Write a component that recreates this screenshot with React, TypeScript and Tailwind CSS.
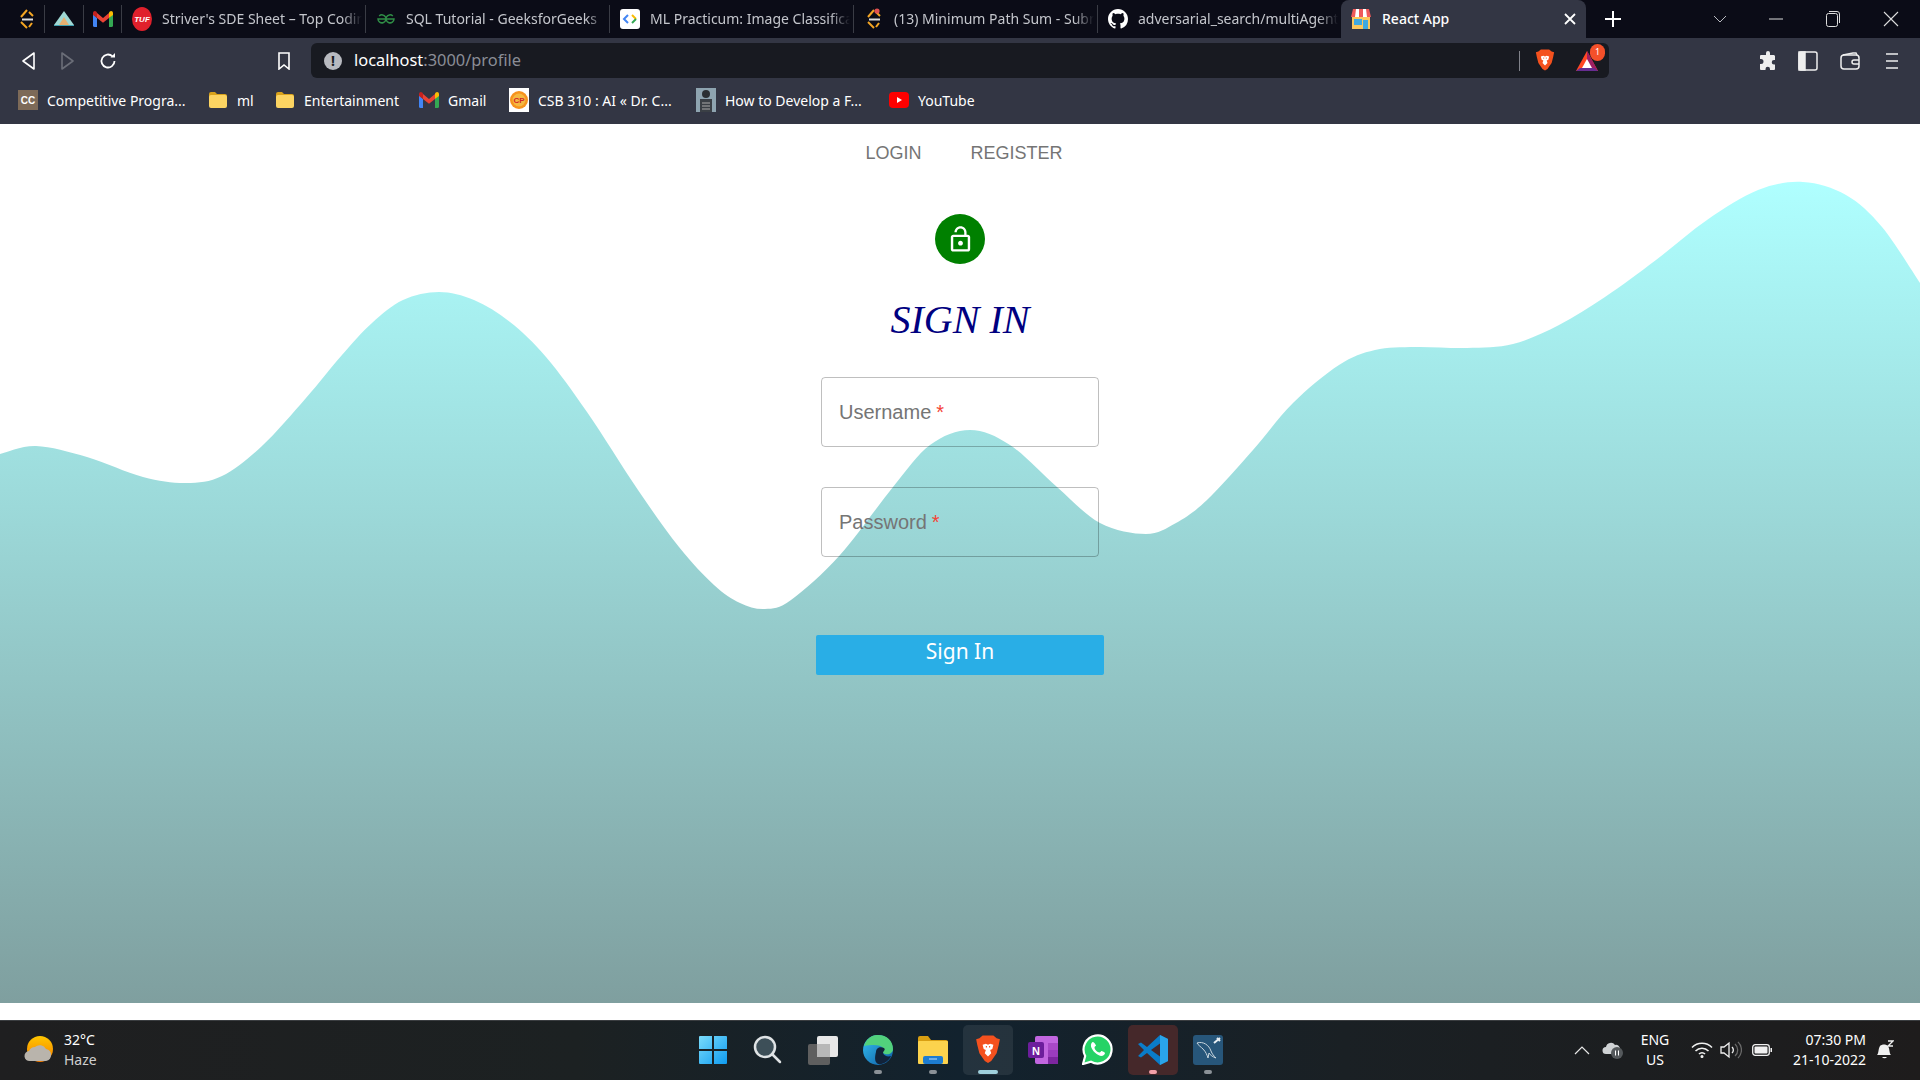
const chromeFont = { fontFamily: '"Noto Sans", sans-serif' };

function smoothPath(pts: number[][]) {
  let d = `M${pts[0][0]} ${pts[0][1]}`;
  for (let i = 0; i < pts.length - 1; i++) {
    const p0 = pts[i - 1] || pts[i];
    const p1 = pts[i];
    const p2 = pts[i + 1];
    const p3 = pts[i + 2] || p2;
    const c1x = p1[0] + (p2[0] - p0[0]) / 6;
    const c1y = p1[1] + (p2[1] - p0[1]) / 6;
    const c2x = p2[0] - (p3[0] - p1[0]) / 6;
    const c2y = p2[1] - (p3[1] - p1[1]) / 6;
    d += `C${c1x} ${c1y} ${c2x} ${c2y} ${p2[0]} ${p2[1]}`;
  }
  return d;
}

// wave outline in page pixels
const wavePoints = [
  [0, 454], [36, 446], [87, 457], [143, 477], [186, 483], [222, 476], [262, 446], [306, 398], [342, 355], [372, 323],
  [403, 300], [439, 292], [474, 300], [510, 322], [546, 357], [587, 412], [638, 490], [679, 547], [714, 585], [740, 603],
  [765, 609], [791, 600], [840, 555], [893, 487], [930, 445], [970, 430], [1010, 445], [1057, 487], [1100, 523], [1146, 534],
  [1176, 523], [1207, 500], [1253, 450], [1293, 403], [1339, 365], [1375, 350], [1416, 347], [1467, 348], [1513, 344], [1559, 325],
  [1605, 297], [1656, 260], [1707, 220], [1758, 190], [1803, 182], [1846, 195], [1882, 227], [1920, 283],
];

function Wave() {
  return (
    <svg viewBox="0 124 1920 879" className="absolute left-0 top-0 w-[1920px] h-[879px]">
      <defs>
        <linearGradient id="wave" gradientUnits="userSpaceOnUse" x1="0" y1="182" x2="0" y2="1003">
          <stop offset="0" stopColor="#afffff" />
          <stop offset="1" stopColor="#7f9f9f" />
        </linearGradient>
      </defs>
      <path d={smoothPath(wavePoints) + "L1920 1003L0 1003Z"} fill="url(#wave)" />
    </svg>
  );
}

function TufLogo({ dot }: { dot?: boolean }) {
  return (
    <svg width="20" height="22" viewBox="0 0 20 22" fill="none">
      <path d="M10 2 4 9" stroke="#f5a623" strokeWidth="2" />
      <path d="M10 20 4 14" stroke="#f5a623" strokeWidth="2" />
      <path d="M12 4 16 8" stroke="#f5a623" strokeWidth="2" />
      <path d="M5 11.5h11" stroke="#ddd" strokeWidth="2" />
      <path d="M15 15 12 19" stroke="#f5a623" strokeWidth="2" />
      {dot && <circle cx="13" cy="3" r="2.6" fill="#e05050" />}
    </svg>
  );
}

function GmailIcon() {
  return (
    <svg width="20" height="16" viewBox="0 0 20 16">
      <path d="M0 3v11.5A1.5 1.5 0 0 0 1.5 16H4V7z" fill="#4285f4" />
      <path d="M20 3v11.5a1.500 1.500 0 0 1-1.500 1.500H16V7z" fill="#34a853" />
      <path d="M16 1.500V7l4-3V2c0-1.800-2-2.600-3.200-1.400z" fill="#fbbc04" />
      <path d="M4 7V2l6 5 6-5v5l-6 4.800z" fill="#ea4335" />
      <path d="M0 2v2l4 3V1.500L3.200.6C2 -.6 0 .2 0 2z" fill="#c5221f" />
    </svg>
  );
}

function BraveIcon({ size }: { size: number }) {
  return (
    <svg width={size} height={size * 1.12} viewBox="0 0 24 27">
      <path d="M4 3 7 .5h10L20 3l3 1-1 5-2 8-5 7-3 2-3-2-5-7-2-8-1-5z" fill="#f4511e" />
      <path d="M7 9l3-1 2 1 2-1 3 1-1 4-2 1 1 3-3 3-3-3 1-3-2-1z" fill="#fff" />
      <path d="M10 11h1M13 11h1" stroke="#f4511e" strokeWidth="1.400" />
    </svg>
  );
}

function FolderIcon() {
  return (
    <svg width="20" height="18" viewBox="0 0 20 18">
      <path d="M1 3a2 2 0 0 1 2-2h4l2 2h8a2 2 0 0 1 2 2v1H1z" fill="#d9a21b" />
      <rect x="1" y="4" width="18" height="13" rx="2" fill="#fcd462" />
    </svg>
  );
}

function Divider() {
  return <div className="w-px h-[28px] bg-[#3a3c45] shrink-0" />;
}

function TabTitle({ text }: { text: string }) {
  return (
    <span className="flex-1 min-w-0 pb-[2px] overflow-hidden whitespace-nowrap text-[14px] text-[#c4c6cc] [mask-image:linear-gradient(to_right,black_90%,transparent)]">
      {text}
    </span>
  );
}

function Tab({ icon, text }: { icon: React.ReactNode; text: string }) {
  return (
    <div className="w-[243px] shrink-0 flex items-center gap-[10px] pl-[10px] pr-[3px]">
      <div className="w-[20px] flex justify-center shrink-0">{icon}</div>
      <TabTitle text={text} />
    </div>
  );
}

function TabBar() {
  return (
    <div className="h-[38px] bg-[#0b0c17] flex items-center shrink-0">
      <div className="w-[44px] flex justify-end pr-[7px] shrink-0"><TufLogo /></div>
      <Divider />
      <div className="w-[38px] flex justify-center shrink-0">
        <svg width="20" height="16" viewBox="0 0 20 16">
          <path d="M10 0 20 14H0z" fill="#9fd8d4" />
          <path d="M10 6 15 14H5z" fill="#e6b070" />
          <path d="M0 14h20v1H0z" fill="#3f9fb0" />
        </svg>
      </div>
      <Divider />
      <div className="w-[37px] flex justify-center shrink-0"><GmailIcon /></div>
      <Divider />
      <Tab
        text="Striver's SDE Sheet – Top Coding"
        icon={
          <svg width="20" height="24" viewBox="0 0 20 24">
            <ellipse cx="10" cy="12" rx="10" ry="12" fill="#e0202c" />
            <text x="10" y="15" textAnchor="middle" fontSize="8" fontWeight="700" fontStyle="italic" fill="#fff" fontFamily="Liberation Sans">TUF</text>
          </svg>
        }
      />
      <Divider />
      <Tab
        text="SQL Tutorial - GeeksforGeeks"
        icon={
          <svg width="18" height="10" viewBox="0 0 18 10" fill="none" stroke="#2f8d46" strokeWidth="1.500">
            <path d="M9 5h8a4 4 0 1 1-1.200-3M9 5H1a4 4 0 1 0 1.200-3" />
          </svg>
        }
      />
      <Divider />
      <Tab
        text="ML Practicum: Image Classification"
        icon={
          <svg width="20" height="20" viewBox="0 0 20 20">
            <rect width="20" height="20" rx="3" fill="#fff" />
            <path d="M8 6 4 10l4 4" stroke="#4285f4" strokeWidth="2" fill="none" />
            <path d="M12 6l4 4" stroke="#fbbc04" strokeWidth="2" fill="none" />
            <path d="M16 10l-4 4" stroke="#34a853" strokeWidth="2" fill="none" />
          </svg>
        }
      />
      <Divider />
      <Tab text="(13) Minimum Path Sum - Submissions" icon={<TufLogo dot />} />
      <Divider />
      <Tab
        text="adversarial_search/multiAgents.py"
        icon={
          <svg width="20" height="20" viewBox="0 0 16 16" fill="#fff">
            <path d="M8 0C3.580 0 0 3.580 0 8c0 3.540 2.290 6.530 5.470 7.590.4.070.55-.170.55-.380 0-.190-.010-.820-.010-1.490-2.010.370-2.530-.490-2.690-.940-.090-.230-.480-.940-.820-1.130-.280-.150-.680-.520-.010-.530.630-.010 1.080.580 1.230.820.720 1.210 1.870.870 2.330.660.070-.520.280-.870.510-1.070-1.780-.200-3.640-.890-3.640-3.950 0-.870.310-1.590.820-2.150-.080-.200-.360-1.020.080-2.120 0 0 .670-.210 2.200.820.640-.180 1.320-.270 2-.270s1.360.090 2 .270c1.530-1.040 2.200-.820 2.200-.820.440 1.100.160 1.920.080 2.120.510.560.820 1.270.820 2.150 0 3.070-1.870 3.750-3.650 3.950.290.250.540.730.540 1.480 0 1.070-.010 1.930-.010 2.200 0 .210.150.460.550.380A8.013 8.013 0 0 0 16 8c0-4.420-3.580-8-8-8z" />
          </svg>
        }
      />
      <div className="w-[245px] h-[38px] shrink-0 bg-[#333644] rounded-t-[8px] flex items-center pl-[10px] pr-[10px] gap-[11px]">
        <svg width="20" height="22" viewBox="0 0 20 22" className="shrink-0">
          <rect x="1" y="8" width="18" height="13" fill="#fbc75c" />
          <rect x="3" y="11" width="8" height="6" fill="#3fa9e0" />
          <rect x="12" y="12" width="5" height="9" fill="#3fa9e0" />
          <path d="M2 1h16l2 8H0z" fill="#ef5a5a" />
          <path d="M5 1h3v8H4zM12 1h3l1 8h-4z" fill="#fff" />
        </svg>
        <span className="flex-1 pb-[2px] text-[14px] font-medium text-white whitespace-nowrap">React App</span>
        <svg width="12" height="12" viewBox="0 0 12 12" stroke="#fff" strokeWidth="1.800"><path d="M1 1l10 10M11 1 1 11" /></svg>
      </div>
      <div className="ml-[19px] w-[16px] shrink-0">
        <svg width="16" height="16" viewBox="0 0 16 16" stroke="#fff" strokeWidth="2"><path d="M8 0v16M0 8h16" /></svg>
      </div>
      <div className="ml-[92px] shrink-0">
        <svg width="14" height="8" viewBox="0 0 14 8" fill="none" stroke="#b8bac0"><path d="M1 1l6 6 6-6" /></svg>
      </div>
      <div className="ml-[42px] shrink-0">
        <svg width="14" height="2" viewBox="0 0 14 2"><path d="M0 1h14" stroke="#ddd" /></svg>
      </div>
      <div className="ml-[43px] shrink-0">
        <svg width="14" height="16" viewBox="0 0 14 16" fill="none" stroke="#ddd"><rect x=".5" y="2.500" width="11" height="13" rx="2" /><path d="M3 .5h8a2.500 2.500 0 0 1 2.500 2.500v9" /></svg>
      </div>
      <div className="ml-[43px] shrink-0">
        <svg width="16" height="16" viewBox="0 0 16 16" stroke="#ddd" strokeWidth="1.100"><path d="M1 1l14 14M15 1 1 15" /></svg>
      </div>
    </div>
  );
}

function Toolbar() {
  return (
    <div className="h-[46px] pb-[1px] bg-[#333644] flex items-center shrink-0">
      <div className="w-[311px] flex items-center shrink-0 pl-[22px]">
        <svg width="13" height="18" viewBox="0 0 13 18" fill="none" stroke="#fff" strokeWidth="1.600" strokeLinejoin="round"><path d="M12 1v16L1 9z" /></svg>
        <svg width="13" height="18" viewBox="0 0 13 18" fill="none" stroke="#6b6e78" strokeWidth="1.600" strokeLinejoin="round" className="ml-[26px]"><path d="M1 1v16l11-8z" /></svg>
        <svg width="18" height="18" viewBox="0 0 18 18" fill="none" stroke="#fff" strokeWidth="1.800" className="ml-[25px]">
          <path d="M15.500 9a6.500 6.500 0 1 1-2-4.700" />
          <path d="M11.500 5.500h4.500V1z" fill="#fff" stroke="none" />
        </svg>
        <svg width="12" height="18" viewBox="0 0 12 18" fill="none" stroke="#fff" strokeWidth="1.600" className="ml-[161px]"><path d="M1 1h10v16l-5-4-5 4z" /></svg>
      </div>
      <div className="w-[1298px] h-[35px] shrink-0 bg-[#181a21] rounded-[6px] flex items-center pl-[13px] pr-[10px]">
        <div className="w-[18px] h-[18px] rounded-full bg-[#b8bac0] text-[#181a21] text-[14px] font-bold flex items-center justify-center leading-none">!</div>
        <div className="ml-[12px] text-[16.4px] text-white leading-none flex-1">
          localhost<span className="text-[#8a8d96]">:3000/profile</span>
        </div>
        <div className="w-px h-[20px] bg-[#80828a]" />
        <div className="ml-[15px]"><BraveIcon size={20} /></div>
        <div className="ml-[20px] relative w-[24px] h-[22px]">
          <svg width="24" height="22" viewBox="0 0 24 22">
            <path d="M12 1 23 21H1z" fill="#ff4724" />
            <path d="M12 1 23 21H12z" fill="#9e1f63" />
            <path d="M1 21h22l-4-3H5z" fill="#662d91" />
            <path d="M12 9l5 9H7z" fill="#fff" />
          </svg>
          <div className="absolute left-[15px] top-[-6px] w-[15px] h-[17px] rounded-full bg-[#f4502a] text-white text-[9px] flex items-center justify-center">1</div>
        </div>
      </div>
      <div className="flex items-center ml-[150px] shrink-0">
        <svg width="18" height="20" viewBox="0 0 18 20" fill="#eee">
          <path d="M7 2a2 2 0 0 1 4 0v2h4a2 2 0 0 1 1 1v4h-1a2.200 2.200 0 0 0 0 4.500h1V18a1 1 0 0 1-1 1h-4v-1a2.200 2.200 0 0 0-4.500 0v1H2a1 1 0 0 1-1-1v-5h1a2.500 2.500 0 0 0 0-5H1V5a1 1 0 0 1 1-1h5z" />
        </svg>
        <svg width="20" height="20" viewBox="0 0 20 20" fill="none" stroke="#eee" strokeWidth="1.500" className="ml-[21px]">
          <rect x="1" y="1" width="18" height="18" rx="2" />
          <rect x="1" y="1" width="6" height="18" fill="#eee" />
        </svg>
        <svg width="20" height="18" viewBox="0 0 20 18" fill="none" stroke="#eee" strokeWidth="1.500" className="ml-[22px]">
          <rect x="1" y="3" width="18" height="14" rx="3" />
          <path d="M3 3l10-2h3l1 2M19 8h-5a2 2 0 0 0 0 4h5" />
        </svg>
        <svg width="12" height="16" viewBox="0 0 12 16" stroke="#eee" strokeWidth="1.500" className="ml-[26px]"><path d="M0 1h12M0 8h12M0 15h12" /></svg>
      </div>
    </div>
  );
}

function Bookmark({ icon, text, className }: { icon: React.ReactNode; text: string; className: string }) {
  return (
    <div className={`flex items-center shrink-0 ${className}`}>
      <div className="w-[20px] flex justify-center shrink-0">{icon}</div>
      <span className="ml-[9px] text-[14px] text-white whitespace-nowrap">{text}</span>
    </div>
  );
}

function BookmarksBar() {
  return (
    <div className="h-[40px] pb-[8px] bg-[#333644] flex items-center pl-[18px] shrink-0">
      <Bookmark
        className="w-[190px]"
        text="Competitive Progra..."
        icon={
          <svg width="20" height="20" viewBox="0 0 20 20">
            <rect width="20" height="20" fill="#7d6a58" />
            <text x="10" y="14" textAnchor="middle" fontSize="10" fontWeight="700" fill="#fff" fontFamily="Liberation Sans">CC</text>
          </svg>
        }
      />
      <Bookmark className="w-[67px]" text="ml" icon={<FolderIcon />} />
      <Bookmark className="w-[144px]" text="Entertainment" icon={<FolderIcon />} />
      <Bookmark className="w-[90px]" text="Gmail" icon={<GmailIcon />} />
      <Bookmark
        className="w-[187px]"
        text="CSB 310 : AI « Dr. C..."
        icon={
          <svg width="20" height="24" viewBox="0 0 20 24">
            <rect width="20" height="24" fill="#fff" />
            <circle cx="10" cy="12" r="9" fill="#f7931e" />
            <circle cx="10" cy="12" r="6.500" fill="#f4b942" />
            <text x="10" y="15" textAnchor="middle" fontSize="8" fontWeight="700" fill="#d3232a" fontFamily="Liberation Sans">CP</text>
          </svg>
        }
      />
      <Bookmark
        className="w-[193px]"
        text="How to Develop a F..."
        icon={
          <svg width="20" height="24" viewBox="0 0 20 24">
            <rect width="20" height="24" fill="#8ea4b0" />
            <circle cx="10" cy="6" r="4" fill="#2b2f33" />
            <rect x="4" y="11" width="12" height="13" fill="#3a3f45" />
            <path d="M6 15h8M6 18h8M6 21h8" stroke="#aaa" />
          </svg>
        }
      />
      <Bookmark
        className="w-[90px]"
        text="YouTube"
        icon={
          <svg width="20" height="16" viewBox="0 0 20 16">
            <rect width="20" height="16" rx="4" fill="#f00" />
            <path d="M8 5l5 3-5 3z" fill="#fff" />
          </svg>
        }
      />
    </div>
  );
}

function Field({ label }: { label: string }) {
  return (
    <div className="w-[278px] h-[70px] rounded-[4px] border border-black/25 flex items-center pl-[17px] text-[20px] text-[#757575]">
      {label}
      <span className="ml-[5px] text-[#f44336]">*</span>
    </div>
  );
}

function SignIn() {
  return (
    <div className="relative bg-white h-[896px] shrink-0 overflow-hidden">
      <Wave />
      <div className="relative flex flex-col items-center" style={{ fontFamily: '"Liberation Sans", sans-serif' }}>
        <nav className="flex gap-[49px] pl-[8px] pt-[17px] h-[90px] text-[18px] leading-[24px] text-[#757575]">
          <span>LOGIN</span>
          <span>REGISTER</span>
        </nav>
        <div className="w-[50px] h-[50px] rounded-full bg-[#008000] flex items-center justify-center">
          <svg width="29" height="29" viewBox="0 0 24 24" fill="#fff">
            <path d="M12 17c1.100 0 2-.9 2-2s-.9-2-2-2-2 .9-2 2 .9 2 2 2zm6-9h-1V6c0-2.760-2.240-5-5-5S7 3.240 7 6h1.900c0-1.710 1.390-3.100 3.100-3.100 1.710 0 3.100 1.390 3.100 3.100v2H6c-1.100 0-2 .9-2 2v10c0 1.100.9 2 2 2h12c1.100 0 2-.9 2-2V10c0-1.100-.9-2-2-2zm0 12H6V10h12v10z" />
          </svg>
        </div>
        <h1 className="mt-[24px] text-[40px] leading-[64px] italic text-[#000080]" style={{ fontFamily: '"Liberation Serif", serif' }}>
          SIGN IN
        </h1>
        <div className="mt-[25px] flex flex-col gap-[40px]">
          <Field label="Username" />
          <Field label="Password" />
        </div>
        <button className="mt-[78px] w-[288px] h-[40px] rounded-[2px] bg-[#29aee6] text-white text-[21px] leading-[32px] pb-[8px]" style={chromeFont}>
          Sign In
        </button>
      </div>
    </div>
  );
}

function TaskIcon({ children, active, dot }: { children: React.ReactNode; active?: string; dot?: string }) {
  return (
    <div className="w-[55px] h-[50px] flex justify-center items-center relative">
      <div className={`w-[50px] h-[50px] rounded-[5px] flex items-center justify-center ${active || ""}`}>{children}</div>
      {dot && <div className={`absolute bottom-[1px] h-[4px] rounded-full ${dot}`} />}
    </div>
  );
}

function Taskbar() {
  return (
    <div className="h-[60px] pb-[2px] shrink-0 border-t border-[#3a3d40] bg-[linear-gradient(to_right,#1f1f20_0%,#1c2122_30%,#12222e_50%,#1a2024_70%,#1e1c1c_100%)] flex items-center text-white" style={chromeFont}>
      <div className="w-[685px] shrink-0 flex items-center pl-[24px]">
        <svg width="32" height="30" viewBox="0 0 32 30">
          <defs>
            <linearGradient id="sun" x1="0" y1="0" x2="0" y2="1">
              <stop offset="0" stopColor="#ffc700" />
              <stop offset="1" stopColor="#f57c00" />
            </linearGradient>
          </defs>
          <circle cx="16" cy="14" r="13" fill="url(#sun)" />
          <path d="M6 26a5 5 0 0 1-1-10 7 7 0 0 1 6-4 7 7 0 0 1 11 2 6 6 0 0 1 5 6 6 6 0 0 1-5 6z" fill="#b9b4ac" />
        </svg>
        <div className="ml-[8px] text-[14px] leading-[20px]">
          <div>32°C</div>
          <div className="text-[#cfcfcf]">Haze</div>
        </div>
      </div>
      <div className="flex items-center shrink-0">
        <TaskIcon>
          <svg width="30" height="30" viewBox="0 0 30 30">
            <defs>
              <linearGradient id="win" x1="0" y1="0" x2="1" y2="1">
                <stop offset="0" stopColor="#7adcfb" />
                <stop offset="1" stopColor="#0f9bf0" />
              </linearGradient>
            </defs>
            <path d="M1 2a1 1 0 0 1 1-1h12v13H1zM16 1h12a1 1 0 0 1 1 1v12H16zM1 16h13v13H2a1 1 0 0 1-1-1zM16 16h13v12a1 1 0 0 1-1 1H16z" fill="url(#win)" />
          </svg>
        </TaskIcon>
        <TaskIcon>
          <svg width="30" height="30" viewBox="0 0 30 30" fill="#3d4f58" stroke="#dfe3e5" strokeWidth="2.500">
            <circle cx="12" cy="12" r="10" />
            <path d="M19 19l8 8" strokeLinecap="round" />
          </svg>
        </TaskIcon>
        <TaskIcon>
          <svg width="30" height="30" viewBox="0 0 30 30">
            <rect x="9" y="1" width="21" height="21" rx="2" fill="#e8e8e8" />
            <rect x="0" y="9" width="22" height="21" rx="2" fill="#5f5f5f" />
            <rect x="9" y="9" width="13" height="13" fill="#b8b8b8" />
          </svg>
        </TaskIcon>
        <TaskIcon dot="w-[8px] bg-[#8b9197]">
          <svg width="32" height="32" viewBox="0 0 32 32">
            <defs>
              <linearGradient id="edge" x1="0" y1="0" x2="1" y2="1">
                <stop offset="0" stopColor="#35c1f1" />
                <stop offset="1" stopColor="#0c59a4" />
              </linearGradient>
            </defs>
            <circle cx="16" cy="16" r="15" fill="url(#edge)" />
            <path d="M2 12C5 2 13 1 16 1c9 0 15 6 15 14 0 4-4 6-8 5-3-1-3-4-2-6-2-3-9-4-19-2z" fill="#52d17c" />
            <path d="M14 18c0-4 4-6 8-4 2 2-1 3-1 5 1 3 5 4 8 3-2 5-8 9-13 8-4-2-3-8-2-12z" fill="#12233a" />
          </svg>
        </TaskIcon>
        <TaskIcon dot="w-[8px] bg-[#8b9197]">
          <svg width="30" height="28" viewBox="0 0 30 28">
            <path d="M0 2a2 2 0 0 1 2-2h8l3 4h15a2 2 0 0 1 2 2v2H0z" fill="#d99f12" />
            <rect y="5" width="30" height="23" rx="1" fill="#fcd34d" />
            <rect x="5" y="20" width="20" height="8" rx="2" fill="#1d7cd0" />
            <path d="M11 23h8" stroke="#bfe0ff" />
          </svg>
        </TaskIcon>
        <TaskIcon active="bg-white/8" dot="w-[20px] bg-[#9fd0dc]">
          <BraveIcon size={26} />
        </TaskIcon>
        <TaskIcon>
          <svg width="30" height="30" viewBox="0 0 30 30">
            <rect x="7" y="1" width="23" height="28" rx="2" fill="#c266e0" />
            <rect x="20" y="8" width="10" height="7" fill="#a949c8" />
            <rect x="20" y="15" width="10" height="7" fill="#9b3cbe" />
            <rect x="20" y="22" width="10" height="7" fill="#7d26a0" />
            <rect x="0" y="7" width="16" height="16" rx="2" fill="#6d1e9c" />
            <text x="8" y="20" textAnchor="middle" fontSize="11" fontWeight="700" fill="#fff" fontFamily="Liberation Sans">N</text>
          </svg>
        </TaskIcon>
        <TaskIcon>
          <svg width="31" height="31" viewBox="0 0 31 31">
            <path d="M1 30l2.200-8A14 14 0 1 1 9 27.800z" fill="#25d366" stroke="#fff" strokeWidth="2.200" />
            <path d="M11 8c-1 0-2.500 2-2 4.500 1 4 6 9 10 9.500 2.500 0 4-1.500 4-3 0-.7-3-2-3.500-2s-1 1.500-2 1.500c-2 0-5-3-5-5 0-1 1.500-1.500 1.500-2S12 8 11 8z" fill="#fff" />
          </svg>
        </TaskIcon>
        <TaskIcon active="bg-[#45282a]" dot="w-[8px] bg-[#f4a0a8]">
          <svg width="30" height="32" viewBox="0 0 30 32">
            <path d="M22 1l8 4v22l-8 4-13-12-6 4.500L0 22l6-6-6-6 3-1.500L9 13z" fill="#0a7cc9" />
            <path d="M22 1l8 4v22l-8 4z" fill="#2aa4ea" />
            <path d="M22 9.500 13 16l9 6.500z" fill="#45282a" />
          </svg>
        </TaskIcon>
        <TaskIcon dot="w-[8px] bg-[#8b9197]">
          <svg width="30" height="30" viewBox="0 0 30 30">
            <rect width="30" height="30" rx="3" fill="#27567a" />
            <path d="M4 8c6-2 12 2 14 8 1 3 3 5 5 7-3-1-6-3-7-5l-1 5c-1-3-2-6-5-9-2-2-5-4-6-6z" fill="none" stroke="#c9d6df" />
            <path d="M21 8l6-5M24 3l3 3" stroke="#e6edf2" strokeWidth="2" />
          </svg>
        </TaskIcon>
      </div>
      <div className="flex-1 flex items-center pl-[339px] min-w-0">
        <svg width="16" height="10" viewBox="0 0 16 10" fill="none" stroke="#e8e8e8" strokeWidth="1.200"><path d="M1 9l7-7 7 7" /></svg>
        <svg width="22" height="18" viewBox="0 0 22 18" className="ml-[12px]">
          <path d="M4 13a3.500 3.500 0 0 1 0-7 5 5 0 0 1 9-2 4 4 0 0 1 5 4v5z" fill="#cfd2d4" />
          <circle cx="15" cy="12" r="6" fill="#55595c" />
          <path d="M13.500 9.500v5M16.500 9.500v5" stroke="#fff" />
        </svg>
        <div className="w-[58px] ml-[2px] text-center text-[14px] leading-[20px]">
          <div>ENG</div>
          <div>US</div>
        </div>
        <svg width="22" height="16" viewBox="0 0 22 16" fill="none" stroke="#f0f0f0" strokeWidth="1.500" className="ml-[7px]">
          <path d="M1 5.500a14 14 0 0 1 20 0M4.500 9a9 9 0 0 1 13 0M8 12a4 4 0 0 1 6 0" />
          <circle cx="11" cy="14.500" r=".8" fill="#f0f0f0" />
        </svg>
        <svg width="22" height="18" viewBox="0 0 22 18" fill="none" stroke="#f0f0f0" strokeWidth="1.300" className="ml-[7px]">
          <path d="M1 6v6h3l5 4V2L4 6z" />
          <path d="M12 6a4 4 0 0 1 0 6" />
          <path d="M15 3a8 8 0 0 1 0 12M18 1a11 11 0 0 1 0 16" stroke="#6a6a6a" />
        </svg>
        <svg width="20" height="12" viewBox="0 0 20 12" className="ml-[10px]">
          <rect x=".7" y=".7" width="16.600" height="10.600" rx="2.500" fill="none" stroke="#f0f0f0" strokeWidth="1.300" />
          <rect x="2.500" y="2.500" width="13" height="7" rx="1" fill="#f0f0f0" />
          <rect x="18.500" y="4" width="1.500" height="4" fill="#f0f0f0" />
        </svg>
        <div className="ml-[11px] w-[83px] text-right text-[14px] leading-[20px] whitespace-nowrap">
          <div>07:30 PM</div>
          <div>21-10-2022</div>
        </div>
        <svg width="18" height="20" viewBox="0 0 18 20" className="ml-[10px]">
          <path d="M1 15c2-2 1-6 3-9 2-2 6-2 8 0 2 3 1 7 3 9z" fill="#f0f0f0" />
          <path d="M6 17a3 3 0 0 0 5 0z" fill="#f0f0f0" />
          <path d="M12 1h5l-5 5h5" stroke="#f0f0f0" strokeWidth="1.300" fill="none" />
        </svg>
      </div>
    </div>
  );
}

export default function App() {
  return (
    <div className="w-[1920px] h-[1080px] flex flex-col overflow-hidden bg-white">
      <div style={chromeFont} className="flex flex-col shrink-0">
        <TabBar />
        <Toolbar />
        <BookmarksBar />
      </div>
      <SignIn />
      <Taskbar />
    </div>
  );
}
